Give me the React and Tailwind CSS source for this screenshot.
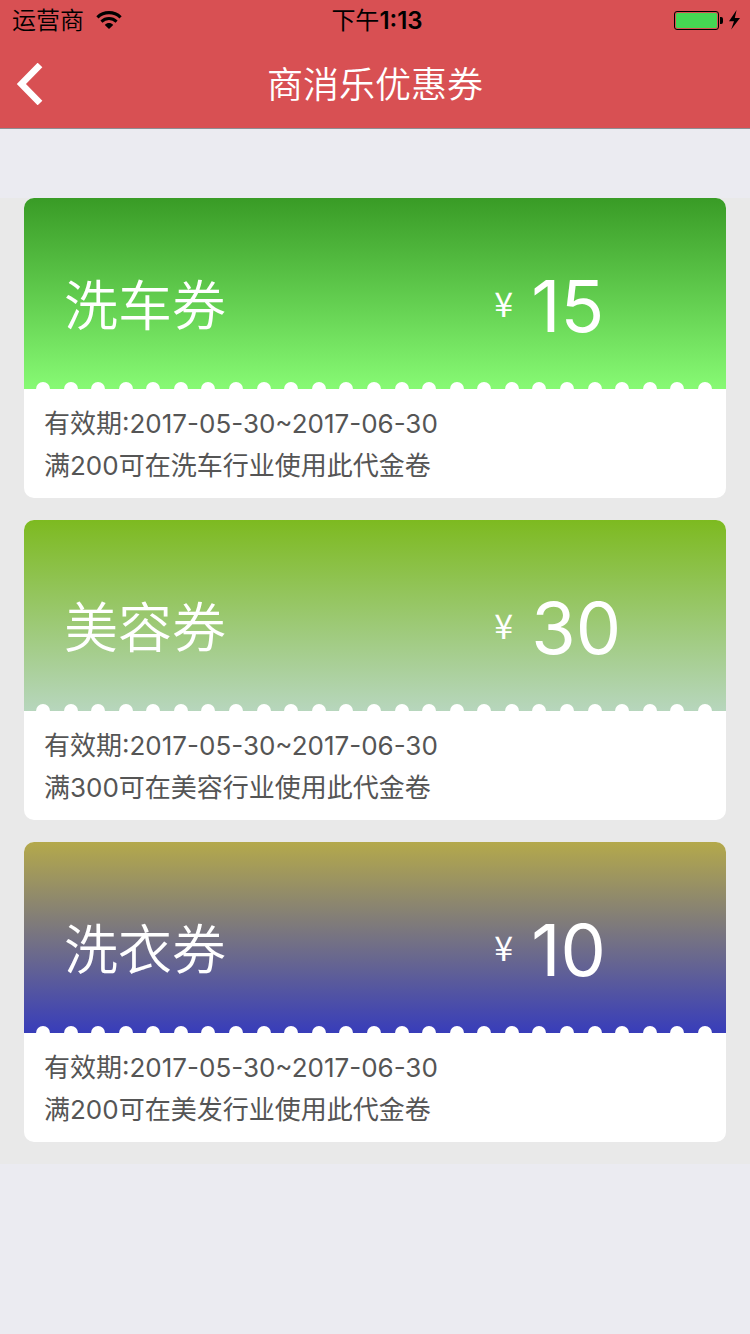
const coupons = [
  {
    name: '洗车券',
    amount: 15,
    period: '2017-05-30~2017-06-30',
    rule: '满200可在洗车行业使用此代金卷',
    gradient: 'from-[#399b26] to-[#87fa74]',
  },
  {
    name: '美容券',
    amount: 30,
    period: '2017-05-30~2017-06-30',
    rule: '满300可在美容行业使用此代金卷',
    gradient: 'from-[#7dba20] to-[#b7d6bd]',
  },
  {
    name: '洗衣券',
    amount: 10,
    period: '2017-05-30~2017-06-30',
    rule: '满200可在美发行业使用此代金卷',
    gradient: 'from-[#b4a94b] to-[#383dba]',
  },
];

const notches = Array.from({ length: 25 }, (_, i) => i);

function WifiIcon() {
  return (
    <svg className="h-[18px] w-[26px]" viewBox="0 0 26 18" fill="none" stroke="#000" aria-hidden="true">
      <path d="M1.4 6.3C8 0.1 18 0.1 24.6 6.3" strokeWidth="3.2" />
      <path d="M5.4 10.6C9.8 6.6 16.2 6.6 20.6 10.6" strokeWidth="3" />
      <path d="M8.8 13.9C11.2 11.5 14.8 11.5 17.2 13.9L13 18Z" fill="#000" stroke="none" />
    </svg>
  );
}

function BatteryIcon() {
  return (
    <svg className="h-5 w-[68px]" viewBox="0 0 68 20" aria-hidden="true">
      <rect x="0.5" y="1.5" width="44" height="18" rx="2.5" fill="none" stroke="#000" />
      <rect x="2" y="3" width="41" height="15" rx="1.5" fill="#45d653" />
      <path d="M46 7h1.2q1.8 0 1.8 2v3q0 2-1.8 2H46z" fill="#000" />
      <path d="M62.6 0L55 11.2H60L57.2 19.6L66 8H60.8Z" fill="#000" />
    </svg>
  );
}

function StatusBar() {
  return (
    <div className="grid h-10 grid-cols-3 items-center pr-2 pl-3 text-2xl text-black">
      <div className="flex items-center gap-3">
        <span className="pt-0.5 font-[350]">运营商</span>
        <WifiIcon />
      </div>
      <span className="pt-0.5 text-center font-semibold">
        <span className="font-normal">下午</span>1:13
      </span>
      <div className="flex justify-end">
        <BatteryIcon />
      </div>
    </div>
  );
}

function Coupon({ name, amount, period, rule, gradient }) {
  return (
    <li className="overflow-hidden rounded-[10px] bg-white">
      <div className={`flex h-[191px] flex-col bg-linear-to-b/srgb ${gradient}`}>
        <div className="flex flex-1 items-center pt-8 pl-10 text-white">
          <h2 className="w-[65%] flex-none pt-0.5 text-[54px] leading-none font-[350]">{name}</h2>
          <p className="flex items-center gap-[18px] leading-none">
            <span className="pb-1.5 font-['Noto_Sans_CJK_SC',sans-serif] text-[34px] font-normal">¥</span>
            <span className="text-7xl leading-none">{amount}</span>
          </p>
        </div>
        <div className="flex justify-between pr-3.5 pl-3">
          {notches.map((i) => (
            <span key={i} className="h-[7px] w-3.5 rounded-t-full bg-white" />
          ))}
        </div>
      </div>
      <div className="px-5 pt-3.5 pb-[11px] text-[26px] leading-[42px] text-[#555]">
        <p>有效期:{period}</p>
        <p>{rule}</p>
      </div>
    </li>
  );
}

export default function App() {
  return (
    <div className="min-h-screen bg-[#ebebf1] font-[Inter,'Noto_Sans_CJK_SC',sans-serif]">
      <header className="border-b border-[#8e8e93] bg-[#d85053]">
        <StatusBar />
        <nav className="grid h-[88px] grid-cols-[64px_1fr_64px] items-center">
          <button type="button" aria-label="返回" className="flex h-full items-center pl-4">
            <svg className="h-[42px] w-7" viewBox="0 0 28 42" fill="none" stroke="#fff" strokeWidth="6.6" aria-hidden="true">
              <path d="M24 2L5.4 21L24 40" />
            </svg>
          </button>
          <h1 className="pt-0.5 text-center text-4xl font-[350] text-white">商消乐优惠券</h1>
        </nav>
      </header>
      <main className="pt-[69px]">
        <ul className="flex flex-col gap-[22px] bg-[#e9e9e9] px-6 pb-[22px]">
          {coupons.map((coupon) => (
            <Coupon key={coupon.name} {...coupon} />
          ))}
        </ul>
      </main>
    </div>
  );
}
